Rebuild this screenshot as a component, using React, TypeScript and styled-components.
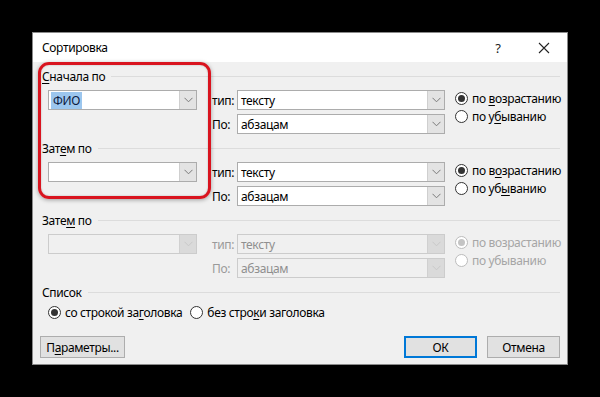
import React from "react";
import styled, { createGlobalStyle, css } from "styled-components";

const Global = createGlobalStyle`
  html, body { margin: 0; padding: 0; background: #000; }
  body { font-family: "Noto Sans", "Open Sans", sans-serif; font-size: 12px; color: #000; letter-spacing: -0.35px; }
`;

const Screen = styled.div`
  width: 600px;
  height: 397px;
  display: flex;
  align-items: center;
  justify-content: center;
  background: #000;
`;

const Dialog = styled.div`
  position: relative;
  width: 536px;
  height: 333px;
  box-sizing: border-box;
  border: 1px solid #8a8a8a;
  background: #f0f0f0;
  display: flex;
  flex-direction: column;
`;

const TitleBar = styled.div`
  height: 29px;
  background: #fff;
  display: flex;
  align-items: center;
  padding-left: 9px;
  flex-shrink: 0;
`;

const Title = styled.div`
  flex: 1;
  font-size: 12px;
`;

const TitleBtn = styled.div`
  width: 46px;
  height: 29px;
  display: flex;
  align-items: center;
  justify-content: center;
  font-size: 13px;
  color: #222;
`;

const Body = styled.div`
  flex: 1;
  padding: 7px 7px 0 8px;
  display: flex;
  flex-direction: column;
`;

const Section = styled.div`
  display: flex;
  flex-direction: column;
  margin-bottom: 7px;
`;

const Header = styled.div`
  display: flex;
  align-items: center;
  height: 14px;
  margin-bottom: 7px;
  padding-left: 1px;
`;

const HeaderText = styled.span<{ $disabled?: boolean }>`
  color: ${(p) => (p.$disabled ? "#a0a0a0" : "#000")};
  white-space: nowrap;
`;

const Line = styled.div`
  flex: 1;
  height: 1px;
  background: #dcdcdc;
  margin-left: 6px;
`;

const Rows = styled.div`
  display: flex;
  padding-left: 7px;
`;

const LeftCol = styled.div`
  width: 149px;
  margin-right: 15px;
  flex-shrink: 0;
`;

const Fields = styled.div`
  display: grid;
  grid-template-columns: 25px 208px;
  grid-auto-rows: 20px;
  row-gap: 4px;
  align-items: center;
  flex-shrink: 0;
`;

const FieldLabel = styled.span<{ $disabled?: boolean }>`
  color: ${(p) => (p.$disabled ? "#9a9a9a" : "#000")};
`;

const Combo = styled.div<{ $disabled?: boolean }>`
  box-sizing: border-box;
  height: 20px;
  width: 100%;
  border: 1px solid ${(p) => (p.$disabled ? "#cccccc" : "#acacac")};
  background: ${(p) => (p.$disabled ? "#f0f0f0" : "#fff")};
  display: flex;
  align-items: center;
  color: ${(p) => (p.$disabled ? "#8f8f8f" : "#000")};
`;

const ComboText = styled.div`
  flex: 1;
  padding-left: 3px;
  white-space: nowrap;
  overflow: hidden;
`;

const Selected = styled.span`
  background: #9cc6ee;
  color: #0d1a40;
  padding: 1px 2px;
  margin-left: -1px;
`;

const DropBtn = styled.div<{ $disabled?: boolean }>`
  width: 16px;
  height: 18px;
  background: ${(p) => (p.$disabled ? "#dadada" : "#e3e3e3")};
  border-left: 1px solid ${(p) => (p.$disabled ? "#d0d0d0" : "#cfcfcf")};
  display: flex;
  align-items: center;
  justify-content: center;
`;

const RadioCol = styled.div`
  display: flex;
  flex-direction: column;
  margin-left: 10px;
  margin-top: -1px;
  min-width: 0;
`;

const RadioRow = styled.label<{ $disabled?: boolean }>`
  display: flex;
  align-items: center;
  height: 18px;
  gap: 4px;
  color: ${(p) => (p.$disabled ? "#a6a6a6" : "#000")};
  white-space: nowrap;
`;

const Circle = styled.span<{ $checked?: boolean; $disabled?: boolean }>`
  box-sizing: border-box;
  width: 13px;
  height: 13px;
  border-radius: 50%;
  border: 1px solid ${(p) => (p.$disabled ? "#bcbcbc" : "#333")};
  background: #fff;
  display: inline-flex;
  align-items: center;
  justify-content: center;
  flex-shrink: 0;
  ${(p) =>
    p.$checked &&
    css`
      &::after {
        content: "";
        width: 7px;
        height: 7px;
        border-radius: 50%;
        background: ${p.$disabled ? "#c4c4c4" : "#333"};
      }
    `}
`;

const ListRow = styled.div`
  display: flex;
  align-items: center;
  height: 16px;
  padding-left: 7px;
  margin-top: -2px;
  gap: 8px;
`;

const Buttons = styled.div`
  display: flex;
  margin-top: 16px;
  margin-left: -1px;
  gap: 10px;
`;

const Button = styled.div<{ $w: number; $primary?: boolean }>`
  box-sizing: border-box;
  width: ${(p) => p.$w}px;
  height: 22px;
  background: #e1e1e1;
  border: ${(p) => (p.$primary ? "2px solid #0078d7" : "1px solid #adadad")};
  display: flex;
  align-items: center;
  justify-content: center;
`;

const Spacer = styled.div`
  flex: 1;
`;

const Highlight = styled.div`
  position: absolute;
  left: 5px;
  top: 29px;
  width: 173px;
  height: 137px;
  box-sizing: border-box;
  border: 3px solid #d9141f;
  border-radius: 11px;
  box-shadow: 0 1px 4px rgba(0, 0, 0, 0.35), inset 0 0 2px rgba(0, 0, 0, 0.25);
  pointer-events: none;
`;

const U = styled.span`
  text-decoration: underline;
  text-underline-offset: 2px;
`;

const Chevron = ({ disabled }: { disabled?: boolean }) => (
  <svg width="9" height="6" viewBox="0 0 9 6">
    <path d="M0.5 0.8 L4.5 4.8 L8.5 0.8" fill="none" stroke={disabled ? "#c8c8c8" : "#7a7a7a"} strokeWidth="1" />
  </svg>
);

const Select = ({ children, disabled }: { children?: React.ReactNode; disabled?: boolean }) => (
  <Combo $disabled={disabled}>
    <ComboText>{children}</ComboText>
    <DropBtn $disabled={disabled}>
      <Chevron disabled={disabled} />
    </DropBtn>
  </Combo>
);

type SortProps = {
  label: React.ReactNode;
  value?: React.ReactNode;
  asc: React.ReactNode;
  desc: React.ReactNode;
  disabled?: boolean;
};

const SortSection = ({ label, value, asc, desc, disabled }: SortProps) => (
  <Section>
    <Header>
      <HeaderText>{label}</HeaderText>
      <Line />
    </Header>
    <Rows>
      <LeftCol>
        <Select disabled={disabled}>{value}</Select>
      </LeftCol>
      <Fields>
        <FieldLabel $disabled={disabled}>тип:</FieldLabel>
        <Select disabled={disabled}>тексту</Select>
        <FieldLabel $disabled={disabled}>По:</FieldLabel>
        <Select disabled={disabled}>абзацам</Select>
      </Fields>
      <RadioCol>
        <RadioRow $disabled={disabled}>
          <Circle $checked $disabled={disabled} />
          <span>{asc}</span>
        </RadioRow>
        <RadioRow $disabled={disabled}>
          <Circle $disabled={disabled} />
          <span>{desc}</span>
        </RadioRow>
      </RadioCol>
    </Rows>
  </Section>
);

export default function App() {
  return (
    <>
      <Global />
      <Screen>
        <Dialog>
          <TitleBar>
            <Title>Сортировка</Title>
            <TitleBtn>?</TitleBtn>
            <TitleBtn>
              <svg width="12" height="12" viewBox="0 0 12 12">
                <path d="M1 1 L11 11 M11 1 L1 11" stroke="#222" strokeWidth="1.1" />
              </svg>
            </TitleBtn>
          </TitleBar>
          <Body>
            <SortSection
              label={
                <>
                  <U>С</U>начала по
                </>
              }
              value={<Selected>ФИО</Selected>}
              asc={
                <>
                  по <U>в</U>озрастанию
                </>
              }
              desc={
                <>
                  по у<U>б</U>ыванию
                </>
              }
            />
            <SortSection
              label={
                <>
                  Зат<U>е</U>м по
                </>
              }
              asc={
                <>
                  по в<U>о</U>зрастанию
                </>
              }
              desc={
                <>
                  по уб<U>ы</U>ванию
                </>
              }
            />
            <SortSection
              disabled
              label={
                <>
                  Зате<U>м</U> по
                </>
              }
              asc="по возрастанию"
              desc="по убыванию"
            />
            <Header>
              <HeaderText>Список</HeaderText>
              <Line />
            </Header>
            <ListRow>
              <RadioRow>
                <Circle $checked />
                <span>
                  со строкой за<U>г</U>оловка
                </span>
              </RadioRow>
              <RadioRow>
                <Circle />
                <span>
                  без стро<U>к</U>и заголовка
                </span>
              </RadioRow>
            </ListRow>
            <Buttons>
              <Button $w={85}>
                <span>
                  П<U>а</U>раметры...
                </span>
              </Button>
              <Spacer />
              <Button $w={73} $primary>
                ОК
              </Button>
              <Button $w={73}>Отмена</Button>
            </Buttons>
          </Body>
          <Highlight />
        </Dialog>
      </Screen>
    </>
  );
}
